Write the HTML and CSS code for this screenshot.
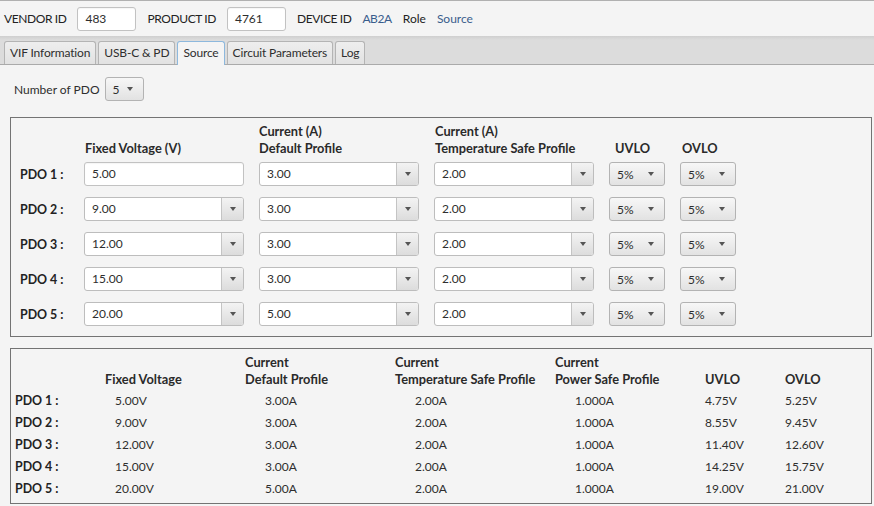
FILE: index.html
```html
<!DOCTYPE html>
<html>
<head>
<meta charset="utf-8">
<link rel="stylesheet" href="styles.css">
</head>
<body>
<div class="topbar">
  <span class="lbl caps">VENDOR ID</span>
  <div class="field id-field">483</div>
  <span class="lbl caps">PRODUCT ID</span>
  <div class="field id-field">4761</div>
  <span class="lbl caps">DEVICE ID</span>
  <span class="val caps">AB2A</span>
  <span class="lbl">Role</span>
  <span class="val">Source</span>
</div>
<div class="tabbar">
  <div class="tab">VIF Information</div>
  <div class="tab">USB-C &amp; PD</div>
  <div class="tab selected">Source</div>
  <div class="tab">Circuit Parameters</div>
  <div class="tab">Log</div>
</div>
<div class="content">
  <div class="pdo-count">
    <span>Number of PDO</span>
    <div class="choice count-choice"><span>5</span><i class="tri"></i></div>
  </div>

  <div class="panel editor">
    <div class="egrid ehead">
      <div></div>
      <div class="h h-fixed"><br>Fixed Voltage (V)</div>
      <div class="h">Current (A)<br>Default Profile</div>
      <div class="h h-temp">Current (A)<br>Temperature Safe Profile</div>
      <div class="h h-uvlo"><br>UVLO</div>
      <div class="h h-ovlo"><br>OVLO</div>
    </div>
    <div class="egrid erows">
      <div class="rl">PDO 1 :</div>
      <div class="field">5.00</div>
      <div class="combo"><span>3.00</span><b><i class="tri"></i></b></div>
      <div class="combo"><span>2.00</span><b><i class="tri"></i></b></div>
      <div class="choice"><span>5%</span><i class="tri"></i></div>
      <div class="choice"><span>5%</span><i class="tri"></i></div>

      <div class="rl">PDO 2 :</div>
      <div class="combo"><span>9.00</span><b><i class="tri"></i></b></div>
      <div class="combo"><span>3.00</span><b><i class="tri"></i></b></div>
      <div class="combo"><span>2.00</span><b><i class="tri"></i></b></div>
      <div class="choice"><span>5%</span><i class="tri"></i></div>
      <div class="choice"><span>5%</span><i class="tri"></i></div>

      <div class="rl">PDO 3 :</div>
      <div class="combo"><span>12.00</span><b><i class="tri"></i></b></div>
      <div class="combo"><span>3.00</span><b><i class="tri"></i></b></div>
      <div class="combo"><span>2.00</span><b><i class="tri"></i></b></div>
      <div class="choice"><span>5%</span><i class="tri"></i></div>
      <div class="choice"><span>5%</span><i class="tri"></i></div>

      <div class="rl">PDO 4 :</div>
      <div class="combo"><span>15.00</span><b><i class="tri"></i></b></div>
      <div class="combo"><span>3.00</span><b><i class="tri"></i></b></div>
      <div class="combo"><span>2.00</span><b><i class="tri"></i></b></div>
      <div class="choice"><span>5%</span><i class="tri"></i></div>
      <div class="choice"><span>5%</span><i class="tri"></i></div>

      <div class="rl">PDO 5 :</div>
      <div class="combo"><span>20.00</span><b><i class="tri"></i></b></div>
      <div class="combo"><span>5.00</span><b><i class="tri"></i></b></div>
      <div class="combo"><span>2.00</span><b><i class="tri"></i></b></div>
      <div class="choice"><span>5%</span><i class="tri"></i></div>
      <div class="choice"><span>5%</span><i class="tri"></i></div>
    </div>
  </div>

  <div class="panel summary">
    <div class="sgrid shead">
      <div></div>
      <div class="h"><br>Fixed Voltage</div>
      <div class="h">Current<br>Default Profile</div>
      <div class="h">Current<br>Temperature Safe Profile</div>
      <div class="h">Current<br>Power Safe Profile</div>
      <div class="h"><br>UVLO</div>
      <div class="h"><br>OVLO</div>
    </div>
    <div class="sgrid srows">
      <div class="rl">PDO 1 :</div><div class="v v1">5.00V</div><div class="v v2">3.00A</div><div class="v v2">2.00A</div><div class="v v2">1.000A</div><div class="v">4.75V</div><div class="v">5.25V</div>
      <div class="rl">PDO 2 :</div><div class="v v1">9.00V</div><div class="v v2">3.00A</div><div class="v v2">2.00A</div><div class="v v2">1.000A</div><div class="v">8.55V</div><div class="v">9.45V</div>
      <div class="rl">PDO 3 :</div><div class="v v1">12.00V</div><div class="v v2">3.00A</div><div class="v v2">2.00A</div><div class="v v2">1.000A</div><div class="v">11.40V</div><div class="v">12.60V</div>
      <div class="rl">PDO 4 :</div><div class="v v1">15.00V</div><div class="v v2">3.00A</div><div class="v v2">2.00A</div><div class="v v2">1.000A</div><div class="v">14.25V</div><div class="v">15.75V</div>
      <div class="rl">PDO 5 :</div><div class="v v1">20.00V</div><div class="v v2">5.00A</div><div class="v v2">2.00A</div><div class="v v2">1.000A</div><div class="v">19.00V</div><div class="v">21.00V</div>
    </div>
  </div>
</div>
</body>
</html>
```

FILE: styles.css
```css
* { box-sizing: border-box; }
html, body { margin: 0; padding: 0; }
body {
  background: #f4f4f4;
  font-family: Lato, "Open Sans", sans-serif;
  font-size: 12px;
  color: #2e2e2e;
  width: 874px;
  height: 506px;
  overflow: hidden;
}

/* top bar */
.topbar {
  border-top: 1px solid #b0b0b0;
  height: 36px;
  display: flex;
  align-items: center;
  gap: 11px;
  padding-left: 4px;
  background: #f4f4f4;
}
.lbl { color: #222; }
.caps { letter-spacing: -0.4px; }
.val { color: #3a5d8c; }
.field {
  background: #fff;
  border: 1px solid #c2c2c2;
  border-radius: 3px;
  height: 24px;
  line-height: 22px;
  padding-left: 7px;
  color: #2e2e2e;
  box-shadow: inset 0 1px 1px rgba(0,0,0,0.04);
}
.id-field { width: 59px; }

/* tabs */
.tabbar {
  height: 29px;
  background: linear-gradient(#cfcfcf, #dcdcdc 4px, #dcdcdc);
  border-bottom: 1px solid #aaaaaa;
  display: flex;
  align-items: flex-end;
  gap: 2px;
  padding-left: 4px;
}
.tab {
  height: 23px;
  line-height: 21px;
  padding: 0 5px;
  letter-spacing: -0.15px;
  border: 1px solid #b4b4b4;
  border-bottom: none;
  border-radius: 3px 3px 0 0;
  background: linear-gradient(#eeeeee, #e2e2e2);
  color: #2e2e2e;
}
.tab.selected {
  background: #f4f4f4;
  border-color: #8db8dd;
  height: 24px;
  margin-bottom: -1px;
}

/* content */
.content { padding: 12px 2px 0 10px; }
.pdo-count {
  display: flex;
  align-items: center;
  gap: 5px;
  padding-left: 4px;
  margin-bottom: 16px;
}
.choice {
  height: 24px;
  border: 1px solid #b3b3b3;
  border-radius: 3px;
  background: linear-gradient(#f7f7f7, #e2e2e2);
  display: flex;
  align-items: center;
  justify-content: space-between;
  padding: 0 10px 0 7px;
  color: #2e2e2e;
}
.count-choice { width: 39px; }
.tri {
  display: block;
  width: 0;
  height: 0;
  border-left: 3.5px solid transparent;
  border-right: 3.5px solid transparent;
  border-top: 4px solid #555;
}

.combo {
  height: 24px;
  border: 1px solid #bdbdbd;
  border-radius: 3px;
  background: #fff;
  display: flex;
  overflow: hidden;
}
.combo span { flex: 1; line-height: 22px; padding-left: 7px; }
.combo b {
  width: 22px;
  border-left: 1px solid #c4c4c4;
  background: linear-gradient(#f3f3f3, #dcdcdc);
  display: flex;
  align-items: center;
  justify-content: center;
}

.panel { border: 1px solid #737373; }
.h { font-weight: bold; font-size: 12.8px; line-height: 17px; color: #2a2a2a; }
.rl { font-weight: bold; font-size: 12.4px; color: #222; display: flex; align-items: center; }

/* editor panel */
.editor { padding: 5px 0 10px 9px; margin-bottom: 11px; }
.egrid {
  display: grid;
  grid-template-columns: 49px 160px 160px 160px 56px 56px;
  column-gap: 15px;
}
.ehead { margin-bottom: 5px; }
.erows { row-gap: 11px; }
.h-fixed { padding-left: 1px; }
.h-temp { padding-left: 1px; }
.h-uvlo { padding-left: 6px; }
.h-ovlo { padding-left: 2px; }

/* summary panel */
.summary { padding: 5px 0 3px 4px; }
.sgrid {
  display: grid;
  grid-template-columns: 90px 140px 150px 160px 150px 80px 80px;
}
.shead { margin-bottom: 2px; }
.srows { grid-auto-rows: 22px; }
.srows .rl, .srows .v { line-height: 22px; }
.v1 { padding-left: 10px; }
.v2 { padding-left: 20px; }
```
